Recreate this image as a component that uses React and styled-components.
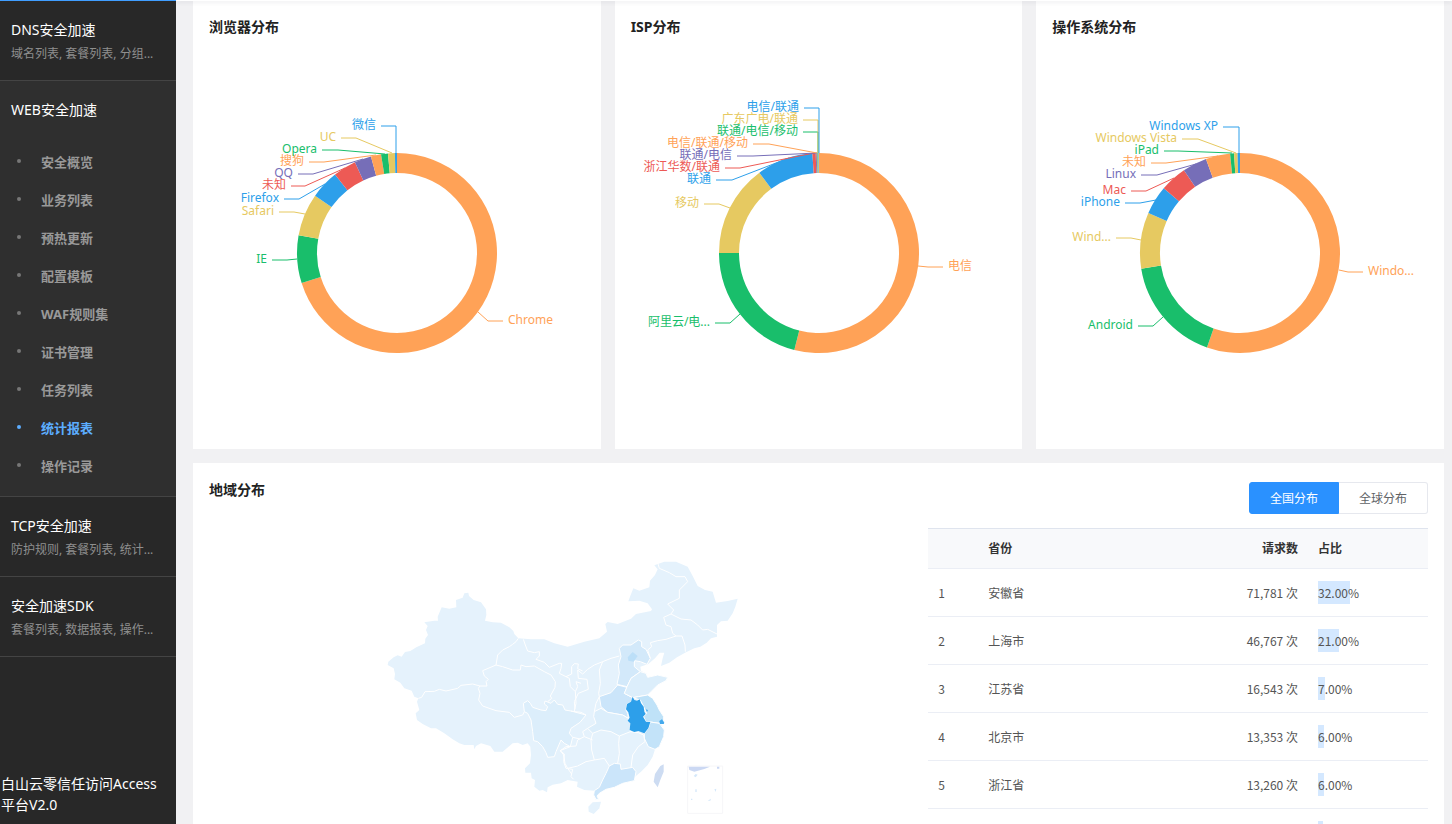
import React, { useState } from "react";
import styled, { createGlobalStyle } from "styled-components";

const GlobalStyle = createGlobalStyle`
  * {
    box-sizing: border-box;
  }
  :root {
    --primary: #2a91ff;
    --dark: #282828;
    --dark-open: #2f2f2f;
    --dark-line: #444;
    --page: #f1f1f3;
    --line: #ebeef5;
  }
  body {
    margin: 0;
    background: var(--page);
    color: #333;
    font-family: "Noto Sans", "Noto Sans CJK SC", sans-serif;
    font-size: 12px;
  }
  a {
    color: inherit;
    text-decoration: none;
  }
`;

const orange = "#ffa257";
const green = "#19be6b";
const yellow = "#e6c961";
const blue = "#2d9fea";
const red = "#ed5a55";
const purple = "#766eb8";

// end: where the slice stops, in degrees clockwise from the top
// line: slice edge, elbow, label side; relative to the ring centre
const browsers = [
  { name: "Chrome", color: orange, end: 252.5, line: [81, 59, 91, 68, 106, 68] },
  { name: "IE", color: green, end: 280.2, line: [-100, 6, -110, 7, -125, 7] },
  { name: "Safari", color: yellow, end: 305, line: [-92, -39, -103, -41, -118, -41] },
  { name: "Firefox", color: blue, end: 321.7, line: [-72, -69, -98, -54, -113, -54] },
  { name: "未知", color: red, end: 335.1, line: [-52, -85, -92, -67, -106, -67] },
  { name: "QQ", color: purple, end: 344.9, line: [-34, -94, -84, -79, -99, -79] },
  { name: "搜狗", color: orange, end: 350.8, line: [-21, -98, -73, -91, -88, -91] },
  { name: "Opera", color: green, end: 354.8, line: [-12, -99, -59, -103, -75, -103] },
  { name: "UC", color: yellow, end: 358.8, line: [-5, -100, -41, -115, -56, -115] },
  { name: "微信", color: blue, end: 360, line: [-1, -100, -1, -127, -16, -127] },
];

const isps = [
  { name: "电信", color: orange, end: 194.3, line: [99, 13, 109, 14, 124, 14] },
  { name: "阿里云/电...", color: green, end: 270, line: [-79, 61, -89, 70, -104, 70] },
  { name: "移动", color: yellow, end: 323.4, line: [-89, -45, -100, -49, -115, -49] },
  { name: "联通", color: blue, end: 356.2, line: [-30, -95, -87, -73, -103, -73] },
  { name: "浙江华数/联通", color: red, end: 358.1, line: [-5, -100, -79, -85, -94, -85] },
  { name: "联通/电信", color: purple, end: 358.7, line: [-2, -100, -66, -97, -82, -97] },
  { name: "电信/联通/移动", color: orange, end: 359.1, line: [-2, -100, -50, -109, -66, -109] },
  { name: "联通/电信/移动", color: green, end: 359.4, line: [-1, -100, -1, -121, -16, -121] },
  { name: "广东广电/联通", color: yellow, end: 359.7, line: [-1, -100, -1, -133, -16, -133] },
  { name: "电信/联通", color: blue, end: 360, line: [0, -100, 0, -145, -15, -145] },
];

const systems = [
  { name: "Windo...", color: orange, end: 199.3, line: [99, 17, 108, 19, 123, 19] },
  { name: "Android", color: green, end: 261, line: [-77, 64, -87, 73, -102, 73] },
  { name: "Wind...", color: yellow, end: 293.6, line: [-99, -13, -109, -15, -124, -15] },
  { name: "iPhone", color: blue, end: 310.3, line: [-84, -53, -100, -50, -115, -50] },
  { name: "Mac", color: red, end: 325.9, line: [-66, -75, -94, -62, -109, -62] },
  { name: "Linux", color: purple, end: 340.1, line: [-44, -89, -83, -78, -99, -78] },
  { name: "未知", color: orange, end: 354.3, line: [-22, -97, -74, -90, -89, -90] },
  { name: "iPad", color: green, end: 356.6, line: [-8, -100, -62, -102, -76, -102] },
  { name: "Windows Vista", color: yellow, end: 358.6, line: [-4, -100, -42, -114, -58, -114] },
  { name: "Windows XP", color: blue, end: 360, line: [-1, -100, -1, -126, -17, -126] },
];

const webMenu = [
  "安全概览",
  "业务列表",
  "预热更新",
  "配置模板",
  "WAF规则集",
  "证书管理",
  "任务列表",
  "统计报表",
  "操作记录",
];

const provinces = [
  { name: "安徽省", count: "71,781", percent: 32 },
  { name: "上海市", count: "46,767", percent: 21 },
  { name: "江苏省", count: "16,543", percent: 7 },
  { name: "北京市", count: "13,353", percent: 6 },
  { name: "浙江省", count: "13,260", percent: 6 },
  { name: "广东省", count: "11,204", percent: 5 },
];

const Layout = styled.div`
  display: flex;
  height: 100vh;
`;

const Sidebar = styled.nav`
  flex: 0 0 176px;
  display: flex;
  flex-direction: column;
  background: var(--dark);
  border-top: 1px solid #409eff;
  overflow: hidden;
`;

const Group = styled.div`
  padding: 19px 11px ${(props) => (props.$open ? 12 : 16)}px;
  background: ${(props) => (props.$open ? "var(--dark-open)" : "transparent")};
  border-bottom: 1px solid var(--dark-line);
`;

const GroupTitle = styled.a`
  display: block;
  font-size: 14px;
  line-height: 20px;
  color: white;
`;

const GroupHint = styled.div`
  margin-top: 4px;
  line-height: 20px;
  color: #8f8f8f;
  white-space: nowrap;
`;

const Menu = styled.ul`
  margin: 22px 0 0;
  padding: 0;
  list-style: none;
`;

const MenuLink = styled.a`
  display: flex;
  align-items: center;
  height: 38px;
  padding-left: 6px;
  font-size: 13px;
  font-weight: 700;
  color: ${(props) => (props.$active ? "#5cadff" : "#999")};
`;

const Dot = styled.span`
  width: 4px;
  height: 4px;
  margin-right: 20px;
  border-radius: 4px;
  background: ${(props) => (props.$active ? "#5cadff" : "#777")};
`;

const Product = styled.a`
  margin-top: auto;
  padding: 0 12px 9px 1px;
  font-size: 14px;
  line-height: 21px;
  color: white;
`;

const Main = styled.main`
  flex: 1;
  min-width: 0;
  padding: 0 8px 16px 17px;
  overflow-y: auto;
  scrollbar-width: none;
`;

const TopBar = styled.header`
  position: sticky;
  top: 0;
  height: 1px;
  margin: 0 -8px -1px -17px;
  background: white;
  box-shadow: 0 1px 4px rgba(0, 21, 41, 0.2);
`;

const Cards = styled.div`
  display: grid;
  grid-template-columns: repeat(3, minmax(0, 1fr));
  gap: 14px;
  margin-bottom: 14px;
`;

const Card = styled.section`
  padding: 16px;
  background: white;
`;

const CardTitle = styled.h2`
  margin: 0;
  font-size: 14px;
  font-weight: 700;
  line-height: 22px;
  color: #222;
`;

const ChartBox = styled.div`
  display: flex;
  justify-content: center;
  margin-top: 35px;

  svg {
    flex: none;
    font-size: 12px;
  }
`;

const CardHead = styled.div`
  display: flex;
  justify-content: space-between;
  align-items: flex-start;
  margin-bottom: 14px;
`;

const Switch = styled.div`
  display: flex;
  margin-top: 3px;
`;

const SwitchButton = styled.button`
  height: 32px;
  padding: 0 20px;
  font-family: inherit;
  font-size: 12px;
  color: ${(props) => (props.$active ? "white" : "#606266")};
  background: ${(props) => (props.$active ? "var(--primary)" : "white")};
  border: 1px solid ${(props) => (props.$active ? "var(--primary)" : "#e6e8ee")};
  cursor: pointer;

  &:first-child {
    border-radius: 3px 0 0 3px;
  }
  &:last-child {
    border-left: none;
    border-radius: 0 3px 3px 0;
  }
`;

const Region = styled.div`
  display: grid;
  grid-template-columns: 59fr 41fr;
`;

const MapBox = styled.div`
  display: flex;
  justify-content: center;
  align-items: flex-start;
  padding-top: 22px;
`;

const Table = styled.table`
  width: 100%;
  table-layout: fixed;
  border-collapse: separate;
  border-spacing: 0;
  color: #555;
`;

const Th = styled.th`
  width: ${(props) => props.$width || "auto"};
  height: 41px;
  padding: 0 10px;
  text-align: ${(props) => props.$align || "left"};
  font-weight: 700;
  line-height: 20px;
  color: #333;
  background: #f8f9fb;
  border-top: 1px solid #dfe4ee;
  border-bottom: 1px solid var(--line);
`;

const Td = styled.td`
  height: 48px;
  padding: 0 10px;
  text-align: ${(props) => props.$align || "left"};
  font-family: "Noto Sans CJK SC", sans-serif;
  line-height: 23px;
  border-bottom: 1px solid var(--line);
`;

const Percent = styled.div`
  background: linear-gradient(#d4e8ff, #d4e8ff) no-repeat;
`;

function point(deg, r) {
  const a = (deg * Math.PI) / 180;
  return `${(Math.sin(a) * r).toFixed(2)} ${(-Math.cos(a) * r).toFixed(2)}`;
}

function slice(from, to) {
  const large = to - from > 180 ? 1 : 0;
  return `M${point(from, 100)}A100 100 0 ${large} 1 ${point(to, 100)}L${point(
    to,
    80
  )}A80 80 0 ${large} 0 ${point(from, 80)}Z`;
}

function Donut({ title, data }) {
  return (
    <Card>
      <CardTitle>{title}</CardTitle>
      <ChartBox>
        <svg width="376" height="360" viewBox="-188 -180 376 360" role="img" aria-label={title}>
          {data.map((el, idx) => (
            <path
              key={idx}
              d={slice(idx ? data[idx - 1].end : 0, el.end)}
              fill={el.color}
            />
          ))}
          {data.map((el, idx) => {
            const [, , , , x, y] = el.line;
            return (
              <g key={idx}>
                <polyline points={el.line.join(" ")} fill="none" stroke={el.color} />
                <text
                  x={x > 0 ? x + 5 : x - 5}
                  y={y + 3}
                  textAnchor={x > 0 ? "start" : "end"}
                  fill={el.color}
                >
                  {el.name}
                </text>
              </g>
            );
          })}
        </svg>
      </ChartBox>
    </Card>
  );
}

function ChinaMap() {
  return (
    <svg width="375" height="274" viewBox="0 0 1125 822" role="img" aria-label="地域分布">
      <path
        fill="#e5f2fc"
        d="M20 345L22 335 38 322 50 316 62 320 72 306 88 303 106 292 132 280 133 266 141 255 135 240 140 228 130 217 160 212 171 212 170 200 182 172 205 176 226 172 225 150 245 143 250 130 262 128 264 138 278 150 300 157 315 178 316 195 312 212 335 217 360 218 385 232 397 243 400 252 412 265 450 268 490 268 520 280 560 290 610 275 655 265 678 245 673 222 680 216 710 222 750 206 765 192 810 183 813 178 800 160 775 152 742 154 747 140 757 115 775 122 805 112 807 92 822 75 830 58 820 46 850 35 885 35 920 50 935 78 950 108 972 120 995 125 1005 158 1040 153 1070 146 1063 170 1055 190 1040 212 1020 214 1008 225 1008 260 990 265 977 278 958 290 940 295 915 307 888 322 865 338 840 348 845 325 850 308 836 308 822 325 802 342 778 350 780 363 795 370 800 382 830 375 860 382 855 392 830 405 810 425 800 435 815 445 828 465 835 480 848 500 850 515 838 520 850 540 848 560 835 590 822 598 815 620 800 645 780 665 762 680 760 692 725 700 700 712 675 718 655 730 648 738 653 748 645 750 638 735 640 722 610 720 588 710 590 695 560 690 540 700 515 704 500 712 498 727 485 720 475 722 460 710 462 690 452 685 450 668 433 668 432 655 447 640 450 615 448 590 440 580 425 585 410 578 395 580 365 605 340 605 328 588 300 580 285 588 280 598 278 585 250 585 235 580 215 568 190 550 165 535 150 535 125 522 108 510 104 490 115 480 108 455 112 445 100 440 92 422 70 415 58 398 40 388 42 372 38 355Z"
      />
      <g stroke="white" strokeWidth="3" strokeLinejoin="round">
        <path
          fill="#dceefb"
          d="M430 485L427 460 440 452 448 460 455 472 480 480 495 482 500 470 490 462 492 453 510 460 520 450 530 463 545 465 552 480 575 484 600 487 615 495 597 517 570 535 565 550 575 562 568 590 550 580 540 570 525 605 520 620 500 622 495 608 485 590 470 575 458 572 455 545 450 510 440 490Z"
        />
        <g transform="translate(510 0)">
          <path fill="#cbe5fa" d="M145 440L180 428 200 405 228 412 220 430 245 443 243 455 228 462 225 480 230 490 232 505 215 495 170 487 150 470Z" />
          <path fill="#dceefb" d="M130 485L150 475 170 487 215 495 232 505 240 520 238 545 205 558 180 545 150 540 125 550 110 535 135 520 128 500Z" />
          <path fill="#d3e9fa" d="M205 295L215 285 240 285 262 270 272 275 272 290 285 298 298 325 288 343 268 335 250 332 250 350 268 365 240 385 228 410 198 403 205 370 202 345 210 320Z" />
          <path fill="#bcdff8" stroke="none" d="M230 322L245 306 260 318 248 335 232 332Z" />
          <path fill="#dceefb" d="M228 410L240 385 268 365 285 370 290 382 320 375 350 382 345 392 320 405 300 425 290 435 262 440 245 443 220 430Z" />
          <path fill="#bfe2f8" d="M245 443L262 440 290 435 305 445 318 465 325 480 338 500 338 512 325 520 298 516 285 515 278 500 287 490 278 470 268 450Z" />
          <path fill="#c3e3f9" d="M298 516L325 520 340 540 338 560 325 590 312 598 292 590 280 565 280 550 292 535Z" />
          <path fill="#cbe5fa" d="M190 640L208 642 210 658 245 652 255 665 250 692 215 700 190 712 165 718 145 730 138 738 143 748 135 748 128 735 130 722 145 712 155 690 165 670 175 648Z" />
        </g>
      </g>
      <path
        fill="none"
        stroke="white"
        strokeWidth="3"
        strokeLinejoin="round"
        d="M112 445L122 442 132 425 160 424 175 418 195 423 230 415 240 406 275 402 297 408 318 408 315 395 322 388 310 378 305 362 345 345 350 315 365 300 385 290 395 283 405 275 412 265M427 268L433 285 440 303 460 308 475 305 475 318 465 328 490 337 505 352 535 340 542 340 540 355 535 370 555 380 565 385 568 410 583 425 590 410 585 395 600 400M345 345L365 350 395 360 418 360 420 345 435 350 460 348 490 365 510 375 523 395 522 412 508 438 512 445 500 455M297 408L292 415 297 430 293 450 305 468 345 482 385 487 400 502 425 495 430 485M568 590L537 602 550 612 548 635 555 655 575 658 570 680 578 688M555 380L572 372 572 350 580 341 592 342 590 356 605 363M583 425L585 460 580 483M575 562L598 567"
      />
      <g transform="translate(510 0)">
        <path
          fill="none"
          stroke="white"
          strokeWidth="3"
          strokeLinejoin="round"
          d="M320 38L325 55 355 68 375 80 402 80 410 95 385 120 385 145 350 162 368 180 360 192 390 207 420 210 440 225 455 240 470 238 498 252M360 192L338 202 345 225 360 230 365 250 375 258 393 258 402 285 403 305M375 258L345 268 320 272 298 278 302 290 290 300 298 325M205 318L180 325 155 335 145 360 148 400 143 430 145 440M155 335L130 345 110 358 95 372 80 360 82 385 108 388 112 418 82 430 70 455 72 478M145 440L135 460 130 485M60 483L105 495M125 550L120 570 122 600 130 630 160 625 175 648M205 558L203 580 205 610 200 640M238 545L262 548 278 555 282 575 262 590 245 615 240 652M125 570L100 560 80 570 75 588 45 590 28 602 38 615 42 640 50 655 80 648 105 635 130 630M110 535L95 545 100 560M50 655L62 672"
        />
        <path
          fill="#2d9fea"
          d="M245 440L250 450 258 452 266 448 270 460 278 470 280 485 284 492 276 500 285 515 298 516 292 535 280 550 262 543 250 546 236 540 238 520 230 512 236 503 232 487 225 478 228 462 240 455Z"
        />
        <path fill="#45a9ec" d="M325 513L333 508 340 518 338 522 327 522ZM284 478L291 480 288 486Z" />
        <path fill="#e5f2fc" d="M112 770L125 757 150 755 145 775 128 792 113 785Z" />
        <path fill="#cddcf2" d="M338 643L328 648 312 672 308 695 320 712 328 690 338 665Z" />
        <path fill="none" stroke="#f6f6f8" strokeWidth="3" d="M410 648H515V790H410Z" />
        <path fill="#cbd8f3" d="M413 650H477L460 657 430 665 415 660ZM498 650H505V656H498Z" />
        <path fill="#d5e8fa" d="M428 678L434 672 440 674 434 682ZM490 718L496 716 494 726ZM433 718H437V726H433ZM470 752L480 746 478 752ZM420 746H424V750H420Z" />
      </g>
    </svg>
  );
}

function App() {
  const [scope, setScope] = useState("全国分布");

  return (
    <>
      <GlobalStyle />
      <Layout>
        <Sidebar>
          <Group>
            <GroupTitle href="#dns">DNS安全加速</GroupTitle>
            <GroupHint>域名列表, 套餐列表, 分组...</GroupHint>
          </Group>
          <Group $open>
            <GroupTitle href="#web">WEB安全加速</GroupTitle>
            <Menu>
              {webMenu.map((el) => (
                <li key={el}>
                  <MenuLink href="#web" $active={el === "统计报表"}>
                    <Dot $active={el === "统计报表"} />
                    {el}
                  </MenuLink>
                </li>
              ))}
            </Menu>
          </Group>
          <Group>
            <GroupTitle href="#tcp">TCP安全加速</GroupTitle>
            <GroupHint>防护规则, 套餐列表, 统计...</GroupHint>
          </Group>
          <Group>
            <GroupTitle href="#sdk">安全加速SDK</GroupTitle>
            <GroupHint>套餐列表, 数据报表, 操作...</GroupHint>
          </Group>
          <Product href="#access">白山云零信任访问Access平台V2.0</Product>
        </Sidebar>

        <Main>
          <TopBar />
          <Cards>
            <Donut title="浏览器分布" data={browsers} />
            <Donut title="ISP分布" data={isps} />
            <Donut title="操作系统分布" data={systems} />
          </Cards>

          <Card>
            <CardHead>
              <CardTitle>地域分布</CardTitle>
              <Switch>
                {["全国分布", "全球分布"].map((el) => (
                  <SwitchButton
                    key={el}
                    type="button"
                    $active={scope === el}
                    onClick={() => setScope(el)}
                  >
                    {el}
                  </SwitchButton>
                ))}
              </Switch>
            </CardHead>
            <Region>
              <MapBox>
                <ChinaMap />
              </MapBox>
              <Table>
                <thead>
                  <tr>
                    <Th $width="50px" />
                    <Th>省份</Th>
                    <Th $width="150px" $align="right">
                      请求数
                    </Th>
                    <Th $width="120px">占比</Th>
                  </tr>
                </thead>
                <tbody>
                  {provinces.map((el, idx) => (
                    <tr key={el.name}>
                      <Td>{idx + 1}</Td>
                      <Td>{el.name}</Td>
                      <Td $align="right">{el.count} 次</Td>
                      <Td>
                        <Percent style={{ backgroundSize: `${el.percent}% 100%` }}>
                          {el.percent}.00%
                        </Percent>
                      </Td>
                    </tr>
                  ))}
                </tbody>
              </Table>
            </Region>
          </Card>
        </Main>
      </Layout>
    </>
  );
}

export default App;
